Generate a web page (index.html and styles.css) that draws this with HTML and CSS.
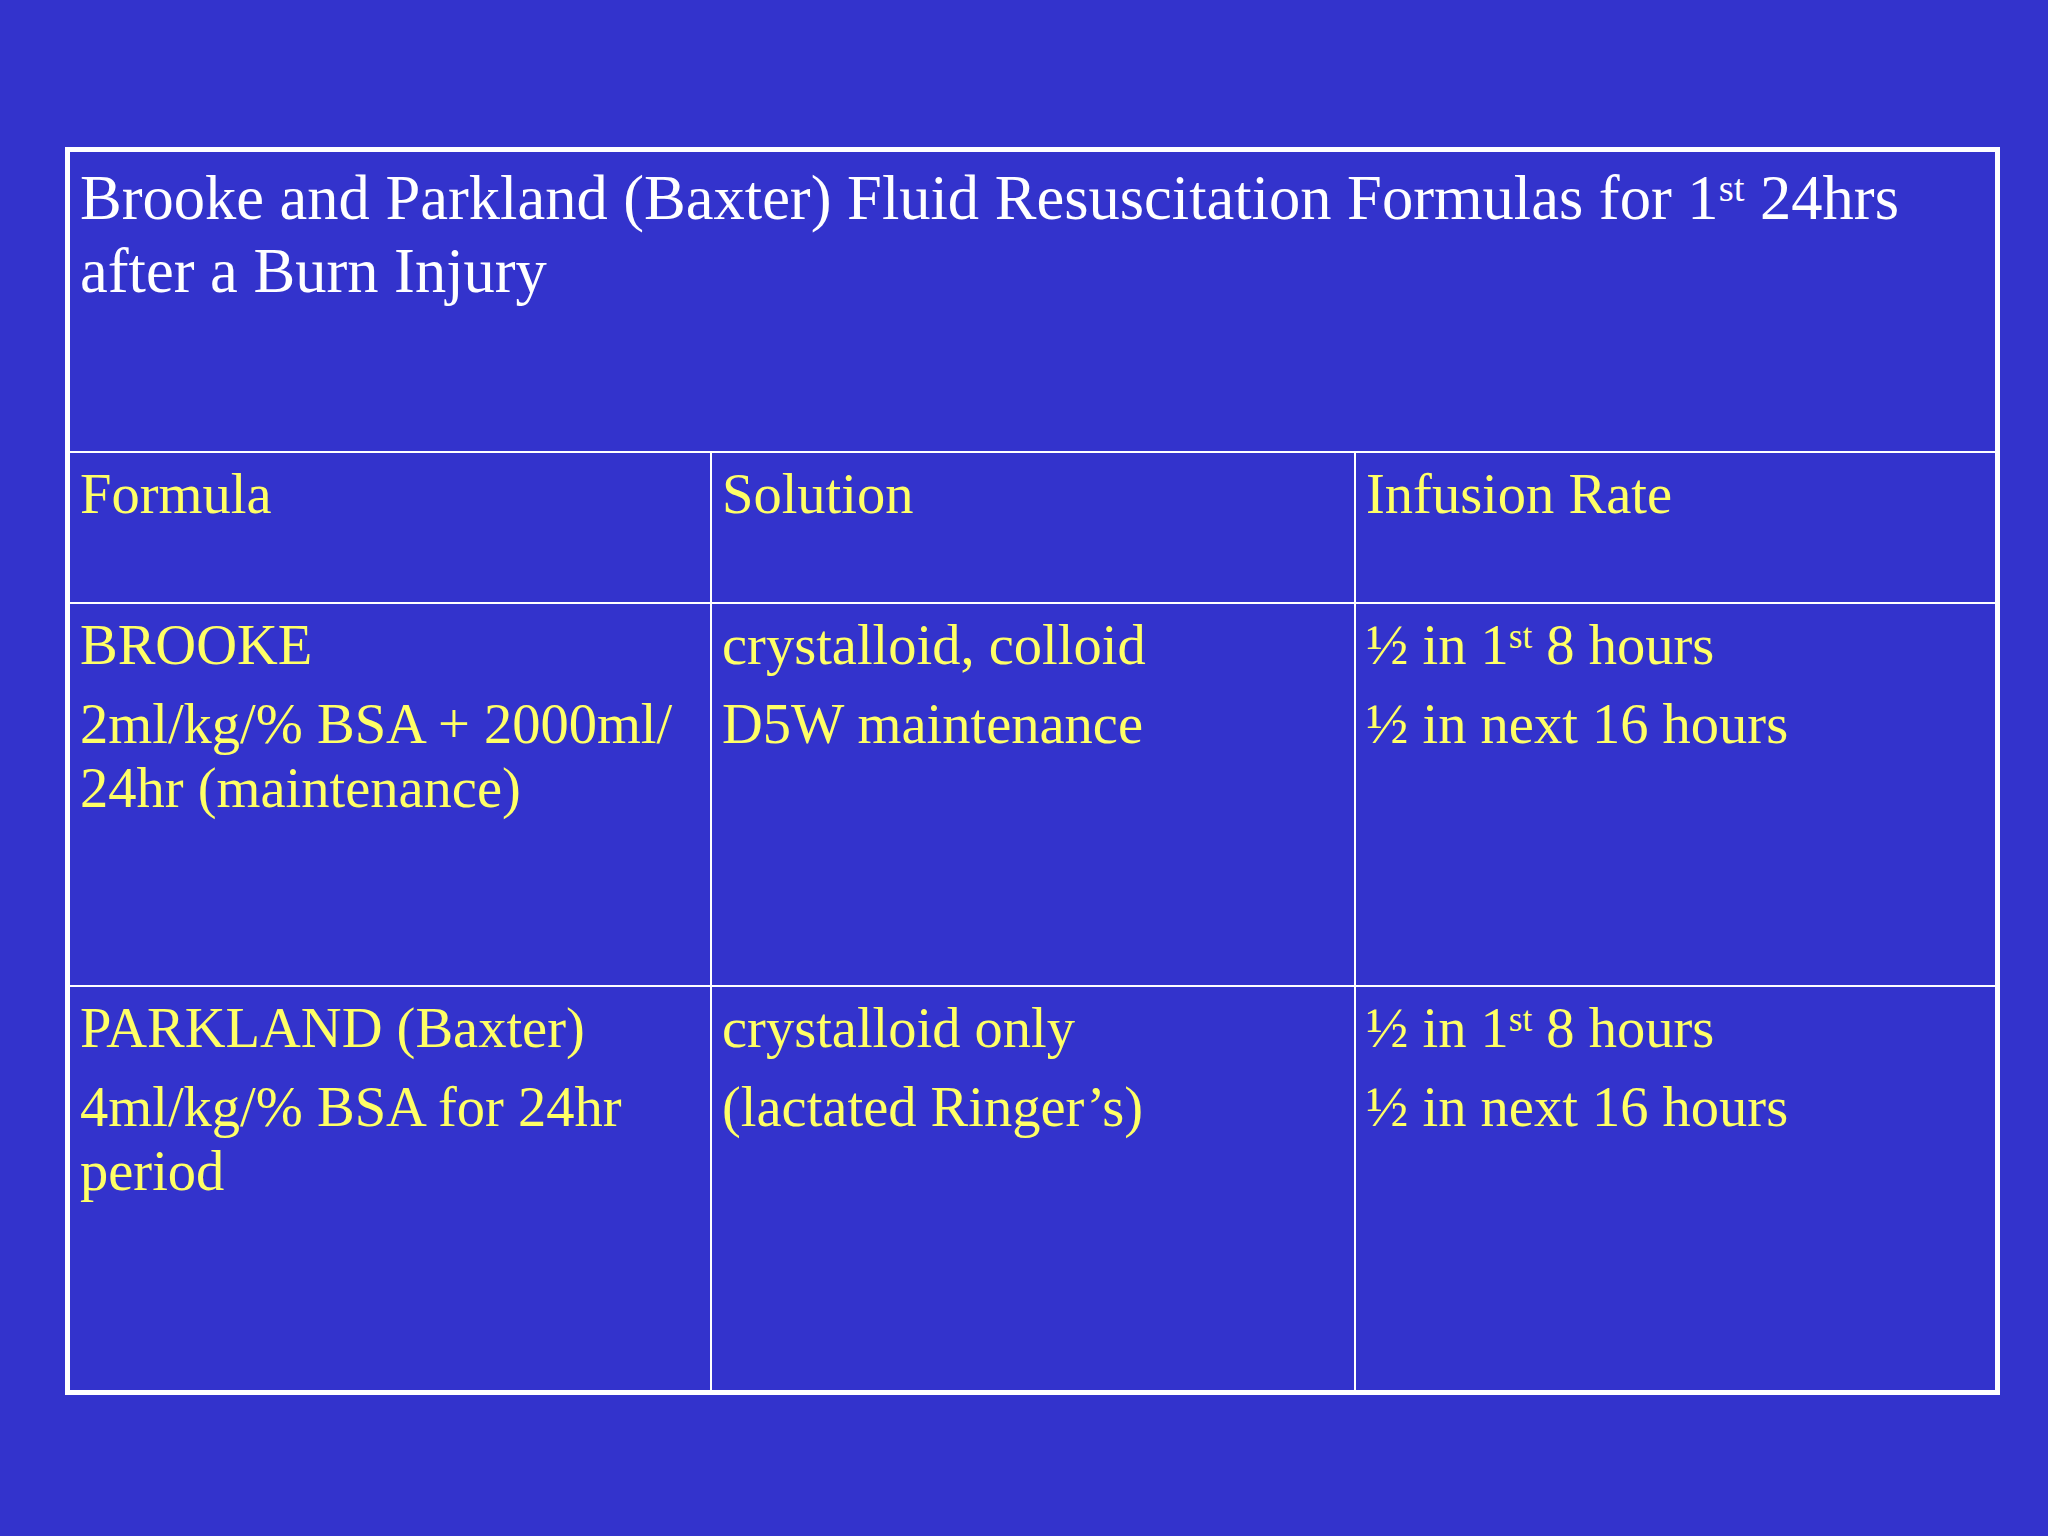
FILE: index.html
```html
<!DOCTYPE html>
<html lang="en">
<head>
<meta charset="utf-8">
<title>Brooke and Parkland Fluid Resuscitation Formulas</title>
<link rel="stylesheet" href="styles.css">
</head>
<body>
<div class="slide">
  <div class="table">
    <div class="cell title"><span class="nowrap">Brooke and Parkland (Baxter) Fluid Resuscitation Formulas for 1<sup>st</sup> 24hrs</span><br>after a Burn Injury</div>

    <div class="cell"><p>Formula</p></div>
    <div class="cell"><p>Solution</p></div>
    <div class="cell"><p>Infusion Rate</p></div>

    <div class="cell">
      <p>BROOKE</p>
      <p>2ml/kg/% BSA + 2000ml/ 24hr (maintenance)</p>
    </div>
    <div class="cell">
      <p>crystalloid, colloid</p>
      <p>D5W maintenance</p>
    </div>
    <div class="cell">
      <p>½ in 1<sup>st</sup> 8 hours</p>
      <p>½ in next 16 hours</p>
    </div>

    <div class="cell">
      <p>PARKLAND (Baxter)</p>
      <p>4ml/kg/% BSA for 24hr period</p>
    </div>
    <div class="cell">
      <p>crystalloid only</p>
      <p>(lactated Ringer’s)</p>
    </div>
    <div class="cell">
      <p>½ in 1<sup>st</sup> 8 hours</p>
      <p>½ in next 16 hours</p>
    </div>
  </div>
</div>
</body>
</html>
```

FILE: styles.css
```css
html, body {
  margin: 0;
  padding: 0;
  background: #3333cc;
}

.slide {
  width: 2048px;
  height: 1536px;
  box-sizing: border-box;
  padding: 147px 0 0 65px;
  background: #3333cc;
  font-family: "Liberation Serif", "Times New Roman", serif;
}

.table {
  width: 1935px;
  box-sizing: border-box;
  border: 5px solid #ffffff;
  background: #ffffff;
  display: grid;
  grid-template-columns: 640px 642px 639px;
  grid-template-rows: 299px 149px 381px 403px;
  gap: 2px;
}

.cell {
  background: #3333cc;
  color: #ffff66;
  font-size: 56.5px;
  line-height: 64px;
  padding: 9px 10px 0 10px;
  overflow: hidden;
}

.cell p {
  margin: 0;
}

.cell p + p {
  margin-top: 15px;
}

.title {
  grid-column: 1 / 4;
  color: #ffffff;
  font-size: 62.5px;
  line-height: 73px;
  padding: 10px 0 0 10px;
}

.nowrap {
  white-space: nowrap;
}

sup {
  font-size: 0.62em;
  line-height: 0;
  vertical-align: 0.46em;
}
```
